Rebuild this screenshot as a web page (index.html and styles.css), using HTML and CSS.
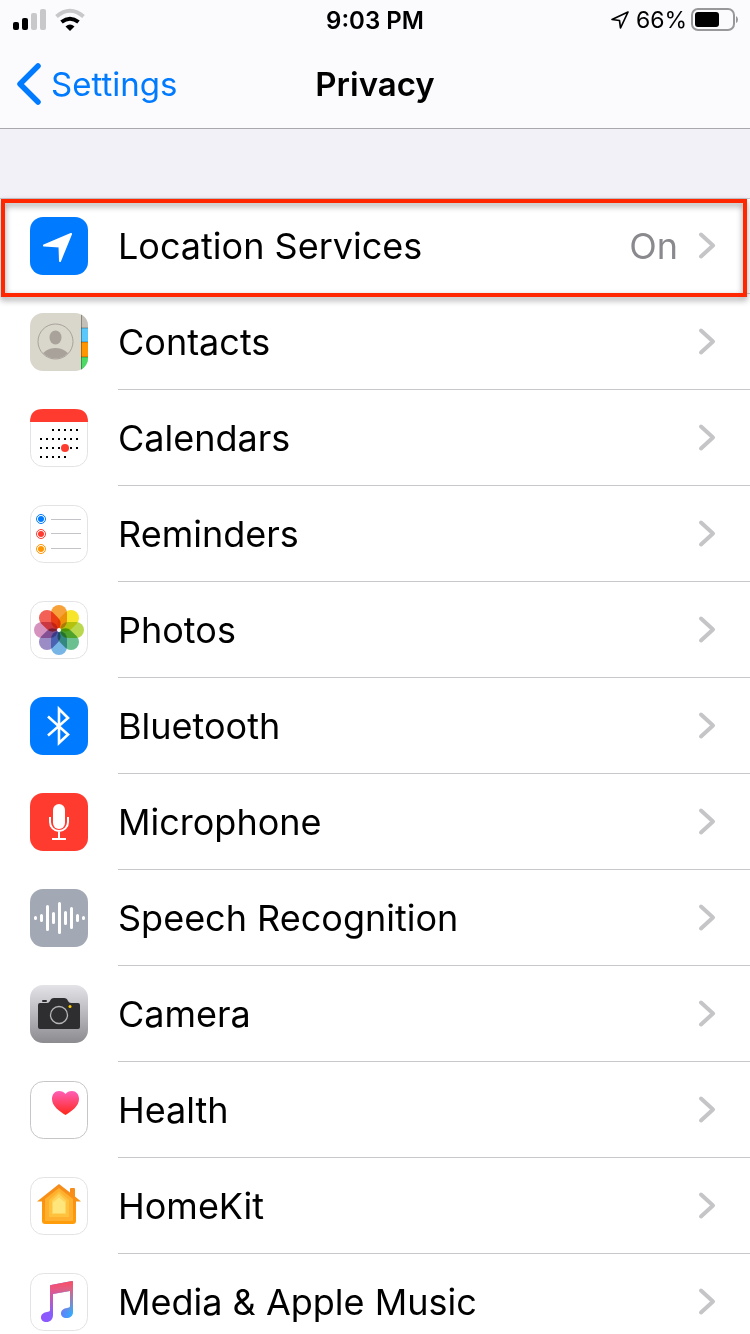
FILE: index.html
```html
<!DOCTYPE html>
<html lang="en">
<head>
    <meta charset="UTF-8">
    <meta name="viewport" content="width=device-width, initial-scale=1.0">
    <title>Privacy</title>
    <link rel="stylesheet" href="styles.css">
</head>
<body>

    <header class="header">
        <div class="status">
            <div class="status-left">
                <svg width="34" height="22" viewBox="0 0 34 22">
                    <rect x="0" y="13" width="6" height="8" rx="2"/>
                    <rect x="9" y="9" width="6" height="12" rx="2"/>
                    <rect x="18" y="4" width="6" height="17" rx="2" fill="#c8c8ca"/>
                    <rect x="27" y="0" width="6" height="21" rx="2" fill="#c8c8ca"/>
                </svg>
                <svg width="30" height="22" viewBox="0 0 30 22" fill="none">
                    <path d="M1.500 7.500Q15-4 28.500 7.500" stroke="#c8c8ca" stroke-width="4"/>
                    <path d="M6.500 13Q15 6.500 23.500 13" stroke="#000" stroke-width="4"/>
                    <path d="M10.500 17.500Q15 13.500 19.500 17.500L15 22Z" fill="#000"/>
                </svg>
            </div>
            <div class="status-time">9:03 PM</div>
            <div class="status-right">
                <svg width="22" height="20" viewBox="0 0 22 20" fill="none" stroke="#000" stroke-width="1.700" stroke-linejoin="round">
                    <path d="M18 2L2 9.500L9.500 10.500L10.500 18Z"/>
                </svg>
                <span>66%</span>
                <svg width="46" height="24" viewBox="0 0 46 24">
                    <rect x="1" y="1" width="42" height="21" rx="6" fill="none" stroke="#98989a" stroke-width="2"/>
                    <rect x="4" y="4" width="24" height="15" rx="3"/>
                    <path d="M45 8Q47 9 47 11.500Q47 14 45 15Z" fill="#98989a"/>
                </svg>
            </div>
        </div>
        <nav class="nav">
            <a class="back" href="#">
                <svg width="26" height="44" viewBox="0 0 26 44" fill="none" stroke="#007aff" stroke-width="5.500" stroke-linecap="round" stroke-linejoin="round">
                    <path d="M22 4L4 22L22 40"/>
                </svg>
                Settings
            </a>
            <h1 class="title">Privacy</h1>
        </nav>
    </header>

    <main class="list">
        <a class="row" href="#">
            <svg class="icon" viewBox="0 0 58 58">
                <rect width="58" height="58" rx="13" fill="#007aff"/>
                <path d="M41 17L14 28.500L29.500 29.500L30 44Z" fill="#fff" stroke="#fff" stroke-width="2" stroke-linejoin="round"/>
            </svg>
            <span class="label">Location Services</span>
            <span class="value">On</span>
            <svg class="chevron" viewBox="0 0 18 28"><path d="M3 2.500L15 13.500L3 24.500"/></svg>
            <span class="highlight"></span>
        </a>
        <a class="row" href="#">
            <svg class="icon" viewBox="0 0 58 58">
                <defs>
                    <clipPath id="tile"><rect width="58" height="58" rx="13"/></clipPath>
                    <clipPath id="avatar"><circle cx="25.500" cy="28.500" r="17"/></clipPath>
                </defs>
                <g clip-path="url(#tile)">
                    <rect width="58" height="58" fill="#d9d6cc"/>
                    <rect x="51" width="7" height="15" fill="#c5c0b7"/>
                    <rect x="51" y="15" width="7" height="14" fill="#5ac8fa"/>
                    <rect x="51" y="29" width="7" height="15" fill="#ff9500"/>
                    <rect x="51" y="44" width="7" height="14" fill="#4cd964"/>
                    <path d="M51.500 0V58M51 15H58M51 29H58M51 44H58" stroke="#000" stroke-opacity=".3"/>
                </g>
                <g clip-path="url(#avatar)" fill="#a9a29b">
                    <ellipse cx="25.500" cy="24.500" rx="6" ry="7"/>
                    <ellipse cx="25.500" cy="45" rx="14" ry="10"/>
                </g>
                <circle cx="25.500" cy="28.500" r="17.500" fill="none" stroke="#a9a29b"/>
            </svg>
            <span class="label">Contacts</span>
            <svg class="chevron" viewBox="0 0 18 28"><path d="M3 2.500L15 13.500L3 24.500"/></svg>
        </a>
        <a class="row" href="#">
            <svg class="icon" viewBox="0 0 58 58">
                <rect class="tile" x=".5" y=".5" width="57" height="57" rx="13"/>
                <path d="M0 13Q0 0 13 0H45Q58 0 58 13Z" fill="#ff3b30"/>
                <path d="M22 21H48M10 30H48M10 39H48M10 48H36" stroke="#000" stroke-width="2" stroke-dasharray="2 4"/>
                <circle cx="35" cy="39" r="4" fill="#ff3b30"/>
            </svg>
            <span class="label">Calendars</span>
            <svg class="chevron" viewBox="0 0 18 28"><path d="M3 2.500L15 13.500L3 24.500"/></svg>
        </a>
        <a class="row" href="#">
            <svg class="icon" viewBox="0 0 58 58">
                <rect class="tile" x=".5" y=".5" width="57" height="57" rx="13"/>
                <g fill="none">
                    <circle cx="11" cy="14" r="4.500" stroke="#007aff"/>
                    <circle cx="11" cy="29" r="4.500" stroke="#ff3b30"/>
                    <circle cx="11" cy="44" r="4.500" stroke="#ff9500"/>
                </g>
                <circle cx="11" cy="14" r="3" fill="#007aff"/>
                <circle cx="11" cy="29" r="3" fill="#ff3b30"/>
                <circle cx="11" cy="44" r="3" fill="#ff9500"/>
                <path d="M21 14.500H51M21 28.500H51M21 43.500H51" stroke="#c3c3c8"/>
            </svg>
            <span class="label">Reminders</span>
            <svg class="chevron" viewBox="0 0 18 28"><path d="M3 2.500L15 13.500L3 24.500"/></svg>
        </a>
        <a class="row" href="#">
            <svg class="icon" viewBox="0 0 58 58">
                <rect class="tile" x=".5" y=".5" width="57" height="57" rx="13"/>
                <g class="petals">
                    <rect x="21" y="4" width="16" height="24" rx="8" fill="#f7a13b"/>
                    <rect x="21" y="4" width="16" height="24" rx="8" fill="#f6e52a" transform="rotate(45 29 29)"/>
                    <rect x="21" y="4" width="16" height="24" rx="8" fill="#b9d84e" transform="rotate(90 29 29)"/>
                    <rect x="21" y="4" width="16" height="24" rx="8" fill="#6cc08f" transform="rotate(135 29 29)"/>
                    <rect x="21" y="4" width="16" height="24" rx="8" fill="#77b5e6" transform="rotate(180 29 29)"/>
                    <rect x="21" y="4" width="16" height="24" rx="8" fill="#9c8cc6" transform="rotate(225 29 29)"/>
                    <rect x="21" y="4" width="16" height="24" rx="8" fill="#d692bf" transform="rotate(270 29 29)"/>
                    <rect x="21" y="4" width="16" height="24" rx="8" fill="#f26056" transform="rotate(315 29 29)"/>
                </g>
                <circle cx="29" cy="29" r="2" fill="#fff"/>
            </svg>
            <span class="label">Photos</span>
            <svg class="chevron" viewBox="0 0 18 28"><path d="M3 2.500L15 13.500L3 24.500"/></svg>
        </a>
        <a class="row" href="#">
            <svg class="icon" viewBox="0 0 58 58">
                <rect width="58" height="58" rx="13" fill="#007aff"/>
                <path d="M18 19.500L38 37.500L29 46V12L38 21L18 38.500" fill="none" stroke="#fff" stroke-width="2.600"/>
            </svg>
            <span class="label">Bluetooth</span>
            <svg class="chevron" viewBox="0 0 18 28"><path d="M3 2.500L15 13.500L3 24.500"/></svg>
        </a>
        <a class="row" href="#">
            <svg class="icon" viewBox="0 0 58 58">
                <rect width="58" height="58" rx="13" fill="#ff3b30"/>
                <rect x="23" y="11" width="12" height="25" rx="6" fill="#fff"/>
                <path d="M20 24V29A9 9 0 0 0 38 29V24M29 38V46M22 46H36" fill="none" stroke="#fff" stroke-width="2"/>
            </svg>
            <span class="label">Microphone</span>
            <svg class="chevron" viewBox="0 0 18 28"><path d="M3 2.500L15 13.500L3 24.500"/></svg>
        </a>
        <a class="row" href="#">
            <svg class="icon" viewBox="0 0 58 58">
                <rect width="58" height="58" rx="13" fill="#a2a9b4"/>
                <path d="M5.500 28.500V29.500M11.500 26.500V31.500M17.500 17.500V40.500M23.500 24.500V33.500M29.500 14.500V43.500M35.500 23.500V34.500M41.500 19.500V38.500M47.500 26.500V31.500M53.500 28.500V29.500" stroke="#fff" stroke-width="3" stroke-linecap="round"/>
            </svg>
            <span class="label">Speech Recognition</span>
            <svg class="chevron" viewBox="0 0 18 28"><path d="M3 2.500L15 13.500L3 24.500"/></svg>
        </a>
        <a class="row" href="#">
            <svg class="icon" viewBox="0 0 58 58">
                <defs>
                    <linearGradient id="silver" x1="0" y1="0" x2="0" y2="1">
                        <stop offset="0" stop-color="#e3e3e8"/>
                        <stop offset="1" stop-color="#8c8b90"/>
                    </linearGradient>
                </defs>
                <rect width="58" height="58" rx="13" fill="url(#silver)"/>
                <path d="M10 18H17Q19 18 20 16Q21 13 24 13H34Q37 13 38 16Q39 18 41 18H48Q50 18 50 20V42Q50 44 48 44H10Q8 44 8 42V20Q8 18 10 18Z" fill="#2e2e30"/>
                <rect x="12" y="15" width="5" height="2" rx="1" fill="#2e2e30"/>
                <circle cx="29" cy="30" r="8.500" fill="none" stroke="#b5b5b8" stroke-width="1.300"/>
                <circle cx="40" cy="21.500" r="1.500" fill="#ffcc00"/>
            </svg>
            <span class="label">Camera</span>
            <svg class="chevron" viewBox="0 0 18 28"><path d="M3 2.500L15 13.500L3 24.500"/></svg>
        </a>
        <a class="row" href="#">
            <svg class="icon" viewBox="0 0 58 58">
                <defs>
                    <linearGradient id="heart" x1="0" y1="0" x2="0" y2="1">
                        <stop offset="0" stop-color="#ff5fb8"/>
                        <stop offset="1" stop-color="#ff2719"/>
                    </linearGradient>
                </defs>
                <rect class="tile tile-dark" x=".5" y=".5" width="57" height="57" rx="13"/>
                <path d="M35.500 13C37 11 39 10 42 10C46 10 49 13 49 18C49 25 42 30 35.500 34C29 30 22 25 22 18C22 13 25 10 29 10C32 10 34 11 35.500 13Z" fill="url(#heart)"/>
            </svg>
            <span class="label">Health</span>
            <svg class="chevron" viewBox="0 0 18 28"><path d="M3 2.500L15 13.500L3 24.500"/></svg>
        </a>
        <a class="row" href="#">
            <svg class="icon" viewBox="0 0 58 58">
                <defs>
                    <linearGradient id="roof" x1="0" y1="0" x2="0" y2="1">
                        <stop offset="0" stop-color="#f58a1c"/>
                        <stop offset="1" stop-color="#ff9d0a"/>
                    </linearGradient>
                </defs>
                <rect class="tile" x=".5" y=".5" width="57" height="57" rx="13"/>
                <path d="M29 7L40 15.500V12Q40 11 41 11H44Q45 11 45 12V19.500L51 24.500H46V44Q46 47 43 47H15Q12 47 12 44V24.500H7Z" fill="url(#roof)"/>
                <path d="M29 11L43 22V43Q43 44 42 44H16Q15 44 15 43V22Z" fill="#ffb02e"/>
                <path d="M29 14.500L39 23V40H19V23Z" fill="#ffc23f"/>
                <path d="M29 17L36 23.500V37H22V23.500Z" fill="#ffd45c"/>
                <path d="M29 20.500L35 25.500V36H23V25.500Z" fill="#ffe67c"/>
            </svg>
            <span class="label">HomeKit</span>
            <svg class="chevron" viewBox="0 0 18 28"><path d="M3 2.500L15 13.500L3 24.500"/></svg>
        </a>
        <a class="row" href="#">
            <svg class="icon" viewBox="0 0 58 58">
                <defs>
                    <linearGradient id="note" x1="11" y1="0" x2="43" y2="0" gradientUnits="userSpaceOnUse">
                        <stop offset="0" stop-color="#9155ff"/>
                        <stop offset=".4" stop-color="#8560fb"/>
                        <stop offset="1" stop-color="#30b0fa"/>
                    </linearGradient>
                    <linearGradient id="note-top" x1="0" y1="8" x2="0" y2="40" gradientUnits="userSpaceOnUse">
                        <stop offset="0" stop-color="#ff4a62"/>
                        <stop offset=".25" stop-color="#f9566f" stop-opacity=".85"/>
                        <stop offset="1" stop-color="#f9566f" stop-opacity="0"/>
                    </linearGradient>
                    <path id="notes" d="M20 13Q20 12 21 12L42 8Q43 8 43 9V39C43 43 40 45 36.500 45C33 45 31 43 31 40.500C31 37 34 35.500 37 35L39 34.500Q40 34 40 33V18L23 21V42C23 46.500 20 49 16.500 49C13 49 11 47 11 44.500C11 41 14 39.500 17 39L19 38.500Q20 38 20 37Z"/>
                </defs>
                <rect class="tile" x=".5" y=".5" width="57" height="57" rx="13"/>
                <use href="#notes" fill="url(#note)"/>
                <use href="#notes" fill="url(#note-top)"/>
            </svg>
            <span class="label">Media &amp; Apple Music</span>
            <svg class="chevron" viewBox="0 0 18 28"><path d="M3 2.500L15 13.500L3 24.500"/></svg>
        </a>
    </main>

</body>
</html>
```

FILE: styles.css
```css
* {
    box-sizing: border-box;
}
body {
    margin: 0;
    height: 100vh;
    overflow: hidden;
    font-family: Inter, "Liberation Sans", sans-serif;
    background-color: #f2f1f7;
    color: #000;
}
a {
    color: inherit;
    text-decoration: none;
}
svg {
    display: block;
    flex-shrink: 0;
    overflow: visible;
}
.header {
    background-color: #fbfbfd;
    border-bottom: 1px solid #a9a9ad;
}
.status {
    display: grid;
    grid-template-columns: 1fr auto 1fr;
    align-items: center;
    height: 40px;
    padding: 0 13px;
    font-size: 23px;
}
.status-left {
    display: flex;
    gap: 8px;
}
.status-time {
    font-size: 24px;
    font-weight: 600;
}
.status-right {
    display: flex;
    align-items: center;
    justify-content: flex-end;
    gap: 4px;
}
.nav {
    display: grid;
    grid-template-columns: 1fr auto 1fr;
    align-items: center;
    height: 88px;
    padding: 0 16px;
    font-size: 33px;
}
.back {
    display: flex;
    align-items: center;
    gap: 9px;
    color: #007aff;
}
.title {
    margin: 0;
    font-size: 33px;
    font-weight: 600;
}
.list {
    margin-top: 69px;
    background-color: #fff;
    box-shadow: inset 0 1px #c8c7cc;
}
.row {
    position: relative;
    display: flex;
    align-items: center;
    height: 96px;
    padding: 0 34px 0 30px;
    font-size: 36px;
}
/* separator starts under the label */
.row::after {
    content: "";
    position: absolute;
    left: 118px;
    right: 0;
    bottom: 0;
    border-bottom: 1px solid #c8c7cc;
}
.icon {
    width: 58px;
    height: 58px;
    margin-right: 30px;
}
.tile {
    fill: #fff;
    stroke: #e3e3e5;
}
.tile-dark {
    stroke: #c6c6c8;
}
.petals rect {
    mix-blend-mode: multiply;
}
.label {
    flex: 1;
}
.value {
    margin-right: 20px;
    color: #8a8a8e;
}
.chevron {
    width: 18px;
    height: 28px;
    fill: none;
    stroke: #c5c5c7;
    stroke-width: 4;
    stroke-linecap: round;
    stroke-linejoin: round;
}
.highlight {
    position: absolute;
    z-index: 1;
    top: 1px;
    bottom: -3px;
    left: 1px;
    right: 3px;
    border: 4px solid #ff2600;
    filter: drop-shadow(0 3px 3px rgba(0, 0, 0, 0.4));
}
```
